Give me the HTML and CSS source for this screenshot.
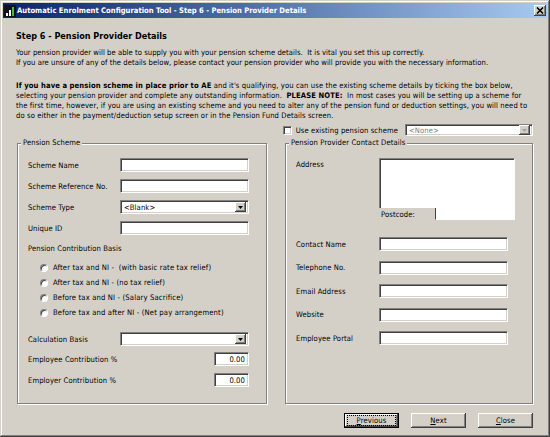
FILE: index.html
```html
<!DOCTYPE html>
<html lang="en">
<head>
    <meta charset="UTF-8">
    <meta name="viewport" content="width=device-width, initial-scale=1.0">
    <title>Automatic Enrolment Configuration Tool - Step 6</title>
    <link rel="stylesheet" href="styles.css">
</head>
<body>
    <div class="window">
        <div class="title-bar">
            <svg class="app-icon" viewBox="0 0 12 12">
                <rect x="0" y="0" width="12" height="12" fill="#10121c"/>
                <rect x="2" y="8" width="2" height="3" fill="#ffffff"/>
                <rect x="5" y="5" width="2" height="6" fill="#ffffff"/>
                <rect x="8" y="2" width="2" height="9" fill="#3fbf3f"/>
            </svg>
            <div class="title-text">Automatic Enrolment Configuration Tool - Step 6 - Pension Provider Details</div>
            <div class="title-close">
                <svg viewBox="0 0 8 7" width="8" height="7">
                    <path d="M1 0.5 L7 6.5 M7 0.5 L1 6.5" stroke="#000" stroke-width="1.6"/>
                </svg>
            </div>
        </div>

        <div class="content">
            <div class="step-title">Step 6 - Pension Provider Details</div>
            <p class="intro">
                Your pension provider will be able to supply you with your pension scheme details.&nbsp; It is vital you set this up correctly.<br>
                If you are unsure of any of the details below, please contact your pension provider who will provide you with the necessary information.
            </p>
            <p class="note">
                <b>If you have a pension scheme in place prior to AE</b> and it's qualifying, you can use the existing scheme details by ticking the box below,<br>
                selecting your pension provider and complete any outstanding information.&nbsp; <b>PLEASE NOTE:</b>&nbsp; In most cases you will be setting up a scheme for<br>
                the first time, however, if you are using an existing scheme and you need to alter any of the pension fund or deduction settings, you will need to<br>
                do so either in the payment/deduction setup screen or in the Pension Fund Details screen.
            </p>

            <div class="existing-row">
                <span class="checkbox"></span>
                <span class="check-label">Use existing pension scheme</span>
                <div class="combo combo-disabled existing-combo">
                    <span class="combo-text">&lt;None&gt;</span>
                    <span class="combo-button"><svg viewBox="0 0 5 3" width="5" height="3"><polygon points="0,0 5,0 2.5,3" fill="#a0a0a0"/></svg></span>
                </div>
            </div>

            <div class="groups">
                <fieldset class="group group-scheme">
                    <legend>Pension Scheme</legend>
                    <div class="group-body">
                        <div class="field">
                            <span class="field-label">Scheme Name</span>
                            <input class="text-input wide" type="text">
                        </div>
                        <div class="field">
                            <span class="field-label">Scheme Reference No.</span>
                            <input class="text-input wide" type="text">
                        </div>
                        <div class="field">
                            <span class="field-label">Scheme Type</span>
                            <div class="combo wide">
                                <span class="combo-text">&lt;Blank&gt;</span>
                                <span class="combo-button"><svg viewBox="0 0 5 3" width="5" height="3"><polygon points="0,0 5,0 2.5,3" fill="#000"/></svg></span>
                            </div>
                        </div>
                        <div class="field">
                            <span class="field-label">Unique ID</span>
                            <input class="text-input wide" type="text">
                        </div>

                        <div class="basis-title">Pension Contribution Basis</div>
                        <div class="radio-list">
                            <div class="radio-row"><span class="radio"></span>After tax and NI -&nbsp; (with basic rate tax relief)</div>
                            <div class="radio-row"><span class="radio"></span>After tax and NI - (no tax relief)</div>
                            <div class="radio-row"><span class="radio"></span>Before tax and NI - (Salary Sacrifice)</div>
                            <div class="radio-row"><span class="radio"></span>Before tax and after NI - (Net pay arrangement)</div>
                        </div>

                        <div class="field calc-field">
                            <span class="field-label">Calculation Basis</span>
                            <div class="combo wide">
                                <span class="combo-text"></span>
                                <span class="combo-button"><svg viewBox="0 0 5 3" width="5" height="3"><polygon points="0,0 5,0 2.5,3" fill="#000"/></svg></span>
                            </div>
                        </div>
                        <div class="field">
                            <span class="field-label">Employee Contribution %</span>
                            <input class="text-input number" type="text" value="0.00">
                        </div>
                        <div class="field">
                            <span class="field-label">Employer Contribution %</span>
                            <input class="text-input number" type="text" value="0.00">
                        </div>
                    </div>
                </fieldset>

                <fieldset class="group group-contact">
                    <legend>Pension Provider Contact Details</legend>
                    <div class="group-body">
                        <div class="field address-field">
                            <span class="field-label">Address</span>
                            <div class="address">
                                <div class="address-text"></div>
                                <div class="postcode-row">
                                    <span class="postcode-label">Postcode:</span>
                                    <span class="postcode-input"></span>
                                </div>
                            </div>
                        </div>
                        <div class="field contact-first">
                            <span class="field-label">Contact Name</span>
                            <input class="text-input wide" type="text">
                        </div>
                        <div class="field">
                            <span class="field-label">Telephone No.</span>
                            <input class="text-input wide" type="text">
                        </div>
                        <div class="field">
                            <span class="field-label">Email Address</span>
                            <input class="text-input wide" type="text">
                        </div>
                        <div class="field">
                            <span class="field-label">Website</span>
                            <input class="text-input wide" type="text">
                        </div>
                        <div class="field">
                            <span class="field-label">Employee Portal</span>
                            <input class="text-input wide" type="text">
                        </div>
                    </div>
                </fieldset>
            </div>

            <div class="buttons">
                <button class="btn btn-default"><span class="focus-ring"><u>P</u>revious</span></button>
                <button class="btn"><u>N</u>ext</button>
                <button class="btn"><u>C</u>lose</button>
            </div>
        </div>
    </div>
</body>
</html>
```

FILE: styles.css
```css
* {
    margin: 0;
    padding: 0;
    box-sizing: border-box;
}
body {
    font-family: "DejaVu Sans Condensed", "DejaVu Sans", sans-serif;
    font-stretch: condensed;
    font-size: 7.6px;
    letter-spacing: 0.1px;
    color: #000;
    background-color: #d4d0c8;
}
.window {
    width: 550px;
    height: 437px;
    padding: 3px;
    display: flex;
    flex-direction: column;
    background-color: #d4d0c8;
    box-shadow: inset -1px -1px #404040, inset 1px 1px #d4d0c8, inset -2px -2px #808080, inset 2px 2px #fff;
}

/* title bar */
.title-bar {
    height: 15px;
    display: flex;
    align-items: center;
    padding: 0 1px 0 1px;
    background: linear-gradient(to right, #0a246a, #a6caf0);
}
.app-icon {
    width: 12px;
    height: 12px;
    margin-right: 1px;
    flex: none;
}
.title-text {
    flex: 1;
    color: #fff;
    font-weight: bold;
    font-size: 7.6px;
    letter-spacing: 0;
    white-space: nowrap;
}
.title-close {
    width: 12px;
    height: 11px;
    display: flex;
    align-items: center;
    justify-content: center;
    background-color: #d4d0c8;
    box-shadow: inset -1px -1px #404040, inset 1px 1px #fff, inset -2px -2px #808080;
}

/* page text */
.content {
    flex: 1;
    display: flex;
    flex-direction: column;
    padding: 0 14px 0 13px;
}
.step-title {
    margin-top: 12px;
    font-size: 9px;
    font-weight: bold;
    letter-spacing: 0;
    line-height: 12px;
}
.intro {
    margin-top: 6px;
    line-height: 9.6px;
    letter-spacing: 0.05px;
    white-space: nowrap;
}
.note {
    margin-top: 14px;
    line-height: 9.8px;
    white-space: nowrap;
}

/* sunken / raised controls */
.text-input,
.combo,
.checkbox,
.address-text {
    background-color: #fff;
    border: 1px solid;
    border-color: #808080 #fff #fff #808080;
    box-shadow: inset 1px 1px #404040, inset -1px -1px #d4d0c8;
}
.text-input {
    height: 14px;
    padding: 0 3px;
    font: inherit;
    letter-spacing: inherit;
    outline: none;
}
.wide {
    width: 129px;
}
.number {
    width: 35px;
    margin-left: auto;
    text-align: right;
}
.combo {
    height: 14px;
    display: flex;
    align-items: center;
    padding: 2px 2px 2px 3px;
}
.combo-text {
    flex: 1;
}
.combo-button {
    width: 11px;
    height: 10px;
    display: flex;
    align-items: center;
    justify-content: center;
    background-color: #d4d0c8;
    box-shadow: inset -1px -1px #404040, inset 1px 1px #fff, inset -2px -2px #808080;
}
.combo-disabled .combo-text {
    color: #808080;
}

.existing-row {
    height: 12px;
    margin-top: 4px;
    display: flex;
    align-items: center;
    justify-content: flex-end;
}
.checkbox {
    width: 9px;
    height: 9px;
    margin-right: 4px;
}
.existing-combo {
    width: 128px;
    height: 12px;
    margin-left: 7px;
}

/* group boxes */
.groups {
    height: 266px;
    margin: 2px 0 0 1px;
    display: flex;
    gap: 18px;
}
.group {
    border: 1px solid #808080;
    box-shadow: inset 1px 1px #fff, 1px 1px #fff;
    min-width: 0;
}
.group legend {
    margin-left: 3px;
    padding: 0 2px;
    line-height: 10px;
    background-color: #d4d0c8;
}
.group-scheme {
    width: 250px;
}
.group-contact {
    flex: 1;
}
.group-body {
    padding: 10px 17px 0 10px;
}
.field {
    height: 14px;
    display: flex;
    align-items: center;
}
.field + .field {
    margin-top: 7px;
}
.field-label {
    width: 92px;
    flex: none;
}
.group-contact .field-label {
    width: 83px;
}
.group-contact .field + .field {
    margin-top: 9.5px;
}
.group-contact .field.contact-first {
    margin-top: 17px;
}
.basis-title {
    margin-top: 9px;
    line-height: 10px;
}
.radio-list {
    margin-top: 6px;
    padding-left: 12px;
    letter-spacing: 0.15px;
}
.radio-row {
    height: 15px;
    display: flex;
    align-items: center;
}
.radio {
    width: 8px;
    height: 8px;
    margin-right: 5px;
    border-radius: 50%;
    background-color: #fff;
    border: 1px solid;
    border-color: #808080 #fff #fff #808080;
    box-shadow: inset 1px 1px #404040;
}
.calc-field {
    margin-top: 12px;
}
.calc-field + .field {
    margin-top: 6px;
}

/* address block */
.address-field {
    height: 62px;
    align-items: flex-start;
}
.address-field .field-label {
    margin-top: 2px;
}
.address {
    width: 137px;
    height: 62px;
    display: flex;
    flex-direction: column;
}
.address-text {
    flex: 1;
    border-bottom: none;
    box-shadow: inset 1px 1px #404040;
}
.postcode-row {
    height: 12px;
    display: flex;
}
.postcode-label {
    width: 56px;
    padding: 2px 0 0 2px;
}
.postcode-input {
    flex: 1;
    background-color: #fff;
    border-left: 1px solid #404040;
    border-right: 1px solid #fff;
    border-bottom: 1px solid #fff;
}

/* buttons */
.buttons {
    margin-top: 9px;
    display: flex;
    justify-content: flex-end;
    gap: 12px;
}
.btn {
    width: 55px;
    height: 15px;
    font: inherit;
    letter-spacing: inherit;
    line-height: 1;
    color: #000;
    background-color: #d4d0c8;
    border: none;
    box-shadow: inset -1px -1px #404040, inset 1px 1px #fff, inset -2px -2px #808080;
    display: flex;
    align-items: center;
    justify-content: center;
}
.btn-default {
    padding: 1px 2px;
    border: 1px solid #000;
}
.focus-ring {
    width: 100%;
    height: 100%;
    display: flex;
    align-items: center;
    justify-content: center;
    border: 1px dotted #000;
}
```
